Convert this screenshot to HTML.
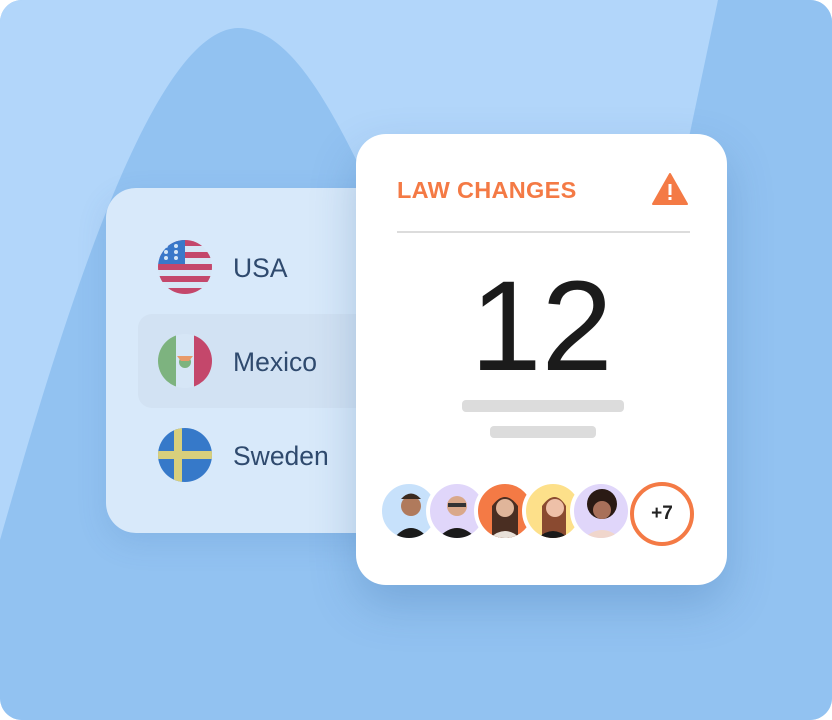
<!DOCTYPE html>
<html><head><style>
body{margin:0;width:832px;height:720px;overflow:hidden;font-family:"Liberation Sans",sans-serif}
.root{position:relative;width:832px;height:720px;border-radius:22px;overflow:hidden;background:#92c2f1}
.lc{position:absolute;left:106px;top:188px;width:290px;height:345px;border-radius:30px;background:#d8e9fa;box-shadow:0 10px 30px rgba(60,110,170,.15)}
.row{position:absolute;left:0;height:94px;width:290px}
.flag{position:absolute;left:52px;top:20px;width:54px;height:54px;border-radius:50%;overflow:hidden}
.lbl{position:absolute;left:127px;top:33px;font-size:26.5px;color:#2f4a6e}
.rc{position:absolute;left:356px;top:134px;width:371px;height:451px;border-radius:30px;background:#fff;box-shadow:0 20px 45px rgba(40,90,150,.25)}
.av{position:absolute;top:480px;width:54px;height:54px;border-radius:50%;border:4px solid #fff;overflow:hidden}
</style></head><body><div class="root">
<svg width="832" height="720" style="position:absolute;left:0;top:0">
<path d="M0 0 H718 L660 560 H0 Z" fill="#b2d6fa"/>
<path d="M0 540 C60 330 150 30 238 28 C300 28 350 140 420 300 L460 720 H0 Z" fill="#92c2f1"/>
<path d="M718 0 H832 V720 H640 L680 180 Z" fill="#92c2f1"/>
</svg>
<div class="lc">
 <div class="row" style="top:32px"><div class="flag"><svg width="54" height="54"><rect width="54" height="54" fill="#d6e6f6"/><g fill="#c4476b"><rect y="0" width="54" height="6"/><rect y="12" width="54" height="6"/><rect y="24" width="54" height="6"/><rect y="36" width="54" height="6"/><rect y="48" width="54" height="6"/></g><rect width="27" height="24" fill="#3a78c9"/><g fill="#d6e6f6"><circle cx="8" cy="6" r="2"/><circle cx="18" cy="6" r="2"/><circle cx="8" cy="12" r="2"/><circle cx="18" cy="12" r="2"/><circle cx="8" cy="18" r="2"/><circle cx="18" cy="18" r="2"/></g></svg></div><div class="lbl">USA</div></div>
 <div class="row" style="top:126px;left:32px;width:258px;background:#d2e2f3;border-radius:14px 0 0 14px"><div class="flag" style="left:20px"><svg width="54" height="54"><rect width="54" height="54" fill="#d6e6f6"/><rect width="18" height="54" fill="#7db37f"/><rect x="36" width="18" height="54" fill="#c4476b"/><circle cx="27" cy="28" r="6" fill="#7db37f"/><path d="M19 22 H35 L31 27 H23 Z" fill="#e89a6a"/></svg></div><div class="lbl" style="left:95px">Mexico</div></div>
 <div class="row" style="top:220px"><div class="flag"><svg width="54" height="54"><rect width="54" height="54" fill="#3679c9"/><rect x="16" width="8" height="54" fill="#d8cf7c"/><rect y="23" width="54" height="8" fill="#d8cf7c"/></svg></div><div class="lbl">Sweden</div></div>
</div>
<div class="rc">
 <div style="position:absolute;left:41px;top:43px;font-size:23.5px;font-weight:bold;color:#f47a45;letter-spacing:.3px">LAW CHANGES</div>
 <svg style="position:absolute;left:295px;top:38px" width="38" height="34"><path d="M19 2 L36 32 H2 Z" fill="#f47a45" stroke="#f47a45" stroke-width="2" stroke-linejoin="round"/><rect x="17.5" y="12" width="3" height="11" fill="#fff"/><rect x="17.5" y="25" width="3" height="3" fill="#fff"/></svg>
 <div style="position:absolute;left:41px;top:97px;width:293px;height:2px;background:#dcdcdc"></div>
 <div style="position:absolute;left:0;width:371px;top:118px;text-align:center;font-size:128px;line-height:150px;color:#1b1b1b">12</div>
 <div style="position:absolute;left:106px;top:266px;width:162px;height:12px;border-radius:4px;background:#dcdcdc"></div>
 <div style="position:absolute;left:134px;top:292px;width:106px;height:12px;border-radius:4px;background:#dcdcdc"></div>
</div>
<div class="av" style="left:378px;background:#c7e1fb"><svg width="54" height="54"><circle cx="29" cy="22" r="10" fill="#b07a5c"/><path d="M19 15 Q29 4 39 15 Z" fill="#3a2a20"/><path d="M12 54 Q29 34 46 54Z" fill="#1a1a1a"/></svg></div>
<div class="av" style="left:426px;background:#e0d6fa"><svg width="54" height="54"><circle cx="27" cy="22" r="10" fill="#d9a88a"/><rect x="18" y="19" width="18" height="4" fill="#333"/><path d="M8 54 Q27 34 46 54Z" fill="#1a1a1a"/></svg></div>
<div class="av" style="left:474px;background:#f47a45"><svg width="54" height="54"><path d="M14 54 V22 Q27 4 40 22 V54Z" fill="#4a2e22"/><circle cx="27" cy="24" r="9" fill="#e0b59a"/><path d="M12 54 Q27 40 42 54Z" fill="#e8e0d8"/></svg></div>
<div class="av" style="left:522px;background:#fde08a"><svg width="54" height="54"><path d="M16 54 V22 Q29 4 40 22 V54Z" fill="#8a4a30"/><circle cx="29" cy="24" r="9" fill="#eec0a8"/><path d="M12 54 Q27 40 42 54Z" fill="#1a1a1a"/></svg></div>
<div class="av" style="left:570px;background:#e0d6fa"><svg width="54" height="54"><circle cx="28" cy="20" r="15" fill="#2a1a14"/><circle cx="28" cy="26" r="9" fill="#a8705a"/><path d="M10 54 Q28 38 46 54Z" fill="#f0d6cc"/></svg></div>
<div style="position:absolute;left:630px;top:482px;width:56px;height:56px;border-radius:50%;border:4px solid #f47a45;background:#fff;text-align:center;line-height:56px;font-size:19px;font-weight:bold;color:#222">+7</div>
</div></body></html>
